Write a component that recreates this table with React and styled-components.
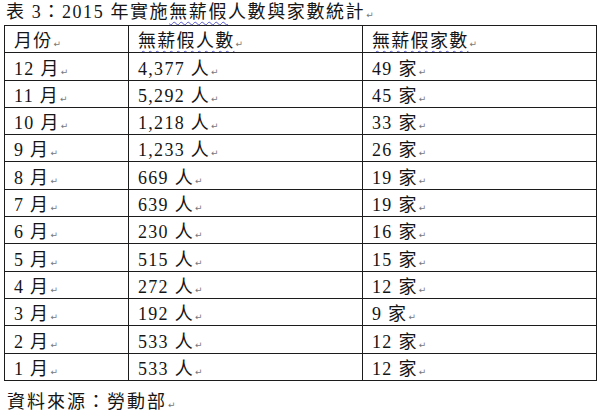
import styled, { createGlobalStyle } from "styled-components";

const GlobalStyle = createGlobalStyle`
  html, body {
    margin: 0;
    padding: 0;
    background: #ffffff;
  }
  body {
    font-family: "Liberation Serif", "Noto Sans CJK TC", serif;
    color: #151515;
  }
`;

const Page = styled.div`
  width: 600px;
  height: 415px;
  padding: 0 0 0 4px;
  box-sizing: border-box;
  overflow: hidden;
`;

const Caption = styled.div`
  height: 25px;
  line-height: 24px;
  font-size: 18px;
  padding-left: 2px;
  white-space: nowrap;
  letter-spacing: 1.6px;
`;

const Wavy = styled.span`
  text-decoration: underline wavy #5a5ad0;
  text-decoration-thickness: 1px;
  text-underline-offset: 3px;
`;

const Mark = styled.span`
  font-family: "DejaVu Sans", sans-serif;
  font-size: 9px;
  line-height: 0;
  color: #777;
  margin-left: 1px;
  letter-spacing: 0;
`;

const Table = styled.table`
  border-collapse: collapse;
  width: 592px;
  table-layout: fixed;
  font-size: 18px;
`;

const Row = styled.tr`
  height: 27.3px;
`;

const Cell = styled.td`
  box-sizing: border-box;
  border: 1.5px solid #1c1c1c;
  padding: 0 0 1px 9px;
  line-height: 20px;
  letter-spacing: 1.3px;
  white-space: nowrap;
  vertical-align: bottom;
  overflow: hidden;
  width: ${(p) => p.$w}px;
`;

const Source = styled.div`
  margin-top: 9px;
  font-size: 18px;
  letter-spacing: 2px;
  padding-left: 3px;
  line-height: 24px;
`;

const rows = [
  ["12", "4,377", "49"],
  ["11", "5,292", "45"],
  ["10", "1,218", "33"],
  ["9", "1,233", "26"],
  ["8", "669", "19"],
  ["7", "639", "19"],
  ["6", "230", "16"],
  ["5", "515", "15"],
  ["4", "272", "12"],
  ["3", "192", "9"],
  ["2", "533", "12"],
  ["1", "533", "12"],
];

const Ret = () => <Mark>↵</Mark>;

export default function App() {
  return (
    <>
      <GlobalStyle />
      <Page>
        <Caption>
          表 3：2015 年實施<Wavy>無薪假</Wavy>人數與家數統計
          <Ret />
        </Caption>
        <Table>
          <tbody>
            <Row>
              <Cell $w={124}>
                月份
                <Ret />
              </Cell>
              <Cell $w={234}>
                <Wavy>無薪假人數</Wavy>
                <Ret />
              </Cell>
              <Cell $w={234}>
                <Wavy>無薪假家數</Wavy>
                <Ret />
              </Cell>
            </Row>
            {rows.map(([m, p, c]) => (
              <Row key={m}>
                <Cell>
                  {m} 月
                  <Ret />
                </Cell>
                <Cell>
                  {p} 人
                  <Ret />
                </Cell>
                <Cell>
                  {c} 家
                  <Ret />
                </Cell>
              </Row>
            ))}
          </tbody>
        </Table>
        <Source>
          資料來源：勞動部
          <Ret />
        </Source>
      </Page>
    </>
  );
}
